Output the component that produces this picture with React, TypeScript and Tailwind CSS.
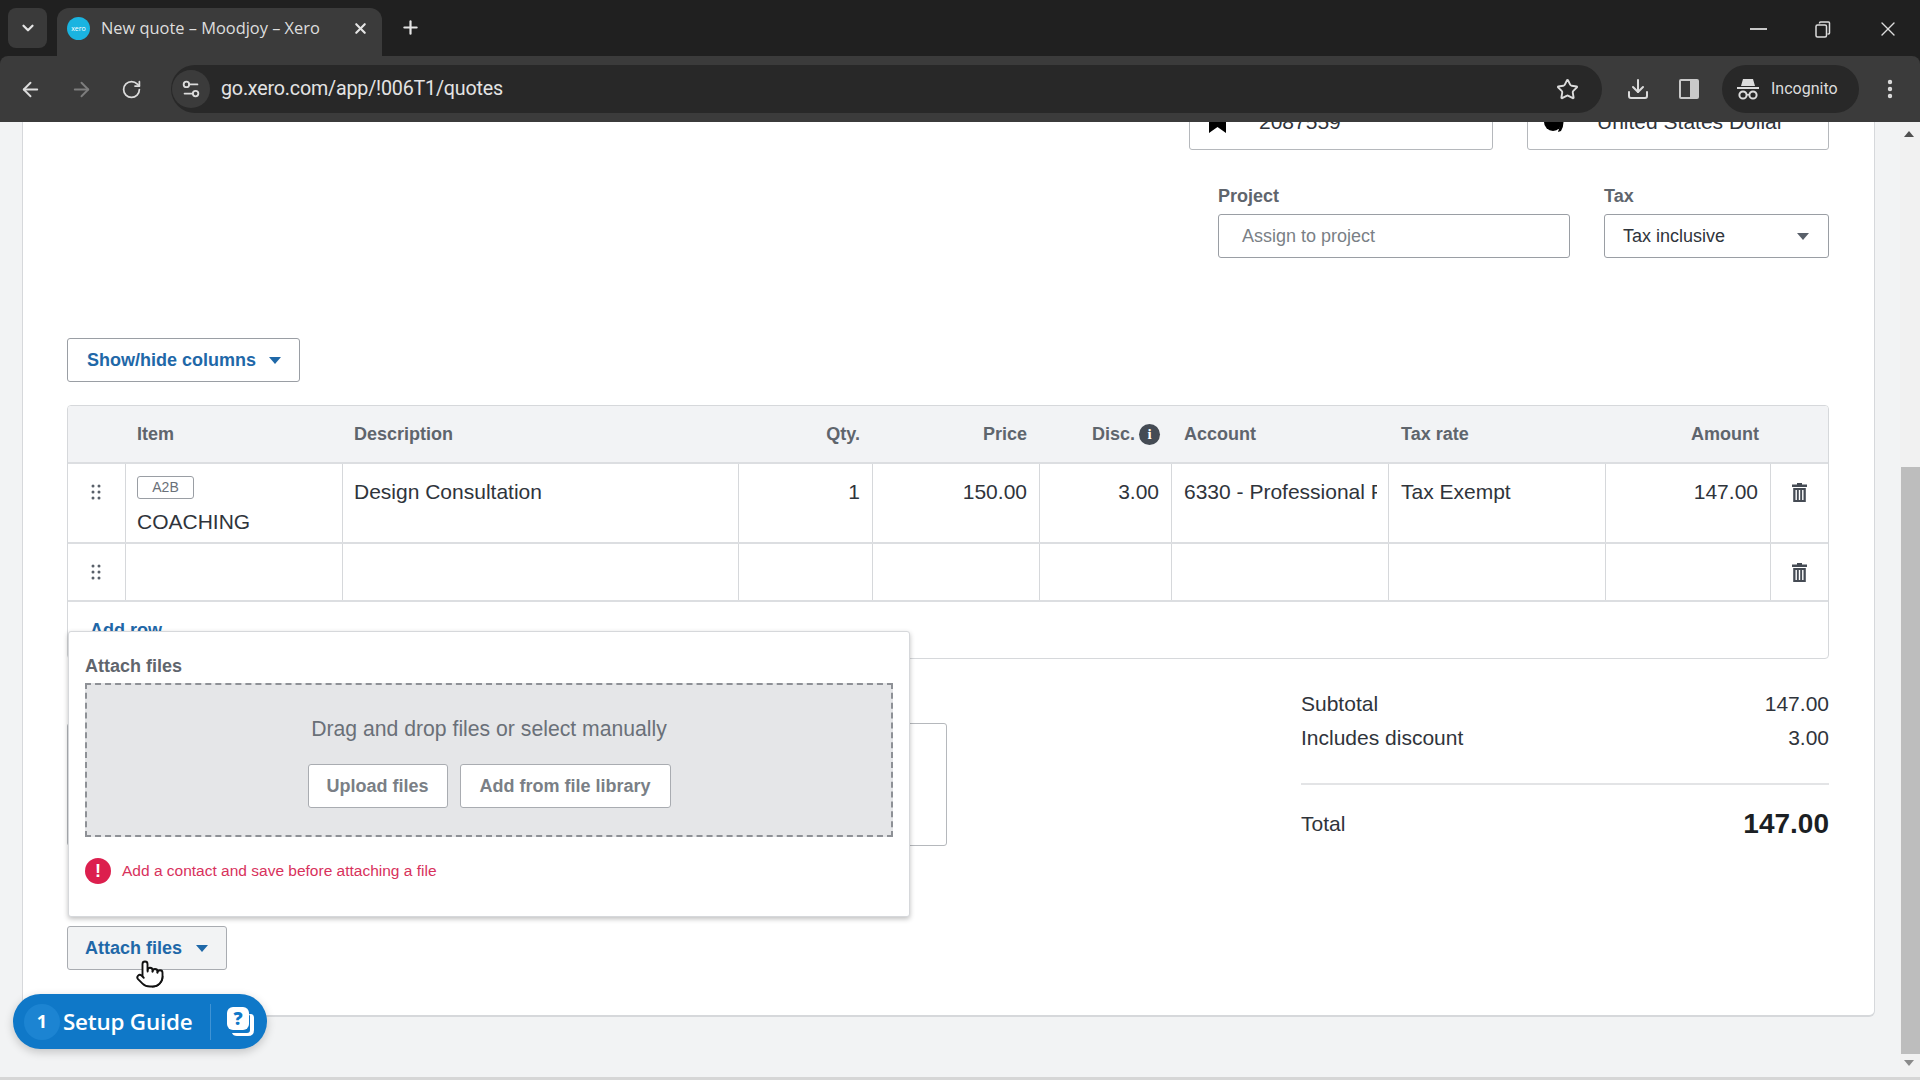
import { ArrowLeft, ArrowRight, ChevronDown, Download, MoreVertical, Plus, Pointer, RotateCw, Settings2, Star, X } from 'lucide-react'

const Caret = ({ className = 'border-t-[#59606a]' }: { className?: string }) => (
  <span className={`inline-block w-0 h-0 border-x-[6px] border-x-transparent border-t-[7px] ${className}`} />
)

const Grip = () => (
  <svg width="10" height="16" viewBox="0 0 10 16" fill="#59606a">
    <circle cx="2" cy="2" r="1.5" /><circle cx="8" cy="2" r="1.5" />
    <circle cx="2" cy="8" r="1.5" /><circle cx="8" cy="8" r="1.5" />
    <circle cx="2" cy="14" r="1.5" /><circle cx="8" cy="14" r="1.5" />
  </svg>
)

const Trash = () => (
  <svg width="15" height="19" viewBox="0 0 15 19" fill="#454b54">
    <path d="M5 0h5v1.5h5V4H0V1.5h5z" />
    <path fillRule="evenodd" d="M1.2 5h12.6v14H1.2zM3.5 7v10h1.4V7zm3.3 0v10h1.4V7zm3.3 0v10h1.4V7z" />
  </svg>
)

const columns = "grid grid-cols-[58px_217px_396px_134px_167px_132px_217px_217px_165px_1fr]"
const cell = "border-r border-[#d6d8db] pl-[11px] pr-[12px]"
const headCell = "pl-[11px] pr-[13px]"

function BrowserChrome() {
  return (
    <div className="shrink-0 bg-[#202020] font-['Open_Sans',sans-serif]">
      {/* tabs */}
      <div className="h-[56px] flex items-end">
        <div className="w-[39px] h-[40px] ml-2 mb-2 rounded-lg bg-[#3a3a3a] flex items-center justify-center text-[#e4e4e4]">
          <ChevronDown size={18} strokeWidth={3} />
        </div>
        <div className="w-[325px] h-[48px] ml-[10px] rounded-t-xl bg-[#3b3b3b] flex items-center pb-[8px] text-[#dedede]">
          <div className="w-[23px] h-[23px] ml-[10px] rounded-full bg-[#1ab4e0] flex items-center justify-center text-[7px] leading-none text-white">xero</div>
          <span className="ml-[11px] text-[16.4px] whitespace-nowrap">New quote – Moodjoy – Xero</span>
          <X size={17} strokeWidth={3} className="ml-[32px] text-[#e4e4e4]" />
        </div>
        <Plus size={21} strokeWidth={2.5} className="ml-[18px] mb-[18px] text-[#e4e4e4]" />
        <div className="flex-1" />
        <div className="flex items-center h-full pt-[2px] text-[#dcdcdc]">
          <div className="w-[17px] h-[2px] bg-[#c8c8c8]" />
          <svg width="16" height="17" viewBox="0 0 16 17" fill="none" stroke="#dcdcdc" strokeWidth="1.5" className="ml-[48px]">
            <rect x="1" y="4" width="10.5" height="12" rx="1.5" />
            <path d="M4.5 2.5V2q0-1 1-1h8q1 0 1 1v10q0 1-1 1h-1" />
          </svg>
          <X size={24} strokeWidth={1.4} className="ml-[45px] mr-5" />
        </div>
      </div>
      {/* toolbar */}
      <div className="h-[66px] bg-[#3b3b3b] rounded-t-lg flex items-center text-[#dcdcdc]">
        <ArrowLeft size={23} className="ml-[19px]" strokeWidth={2} />
        <ArrowRight size={23} className="ml-[28px] text-[#7d7d7d]" strokeWidth={2} />
        <RotateCw size={21} className="ml-[28px]" strokeWidth={2} />
        <div className="w-[1431px] h-[48px] ml-[29px] rounded-full bg-[#282828] flex items-center">
          <div className="w-[38px] h-[38px] ml-[1px] rounded-full bg-[#3b3b3b] flex items-center justify-center">
            <Settings2 size={22} strokeWidth={2} />
          </div>
          <span className="ml-[11px] text-[19.7px] tracking-[-0.2px] font-['Roboto',sans-serif] text-[#e3e3e3]">go.xero.com/app/!006T1/quotes</span>
          <div className="flex-1" />
          <Star size={23} strokeWidth={2} className="mr-[23px]" />
        </div>
        <Download size={24} strokeWidth={2} className="ml-[24px]" />
        <svg width="22" height="22" viewBox="0 0 22 22" className="ml-[28px]">
          <rect x="1" y="1" width="20" height="20" rx="2" fill="#c9c9c9" />
          <rect x="3" y="3" width="9" height="16" fill="#3b3b3b" />
        </svg>
        <div className="w-[137px] h-[48px] ml-[22px] rounded-full bg-[#282828] flex items-center">
          <svg width="24" height="24" viewBox="0 0 24 24" className="ml-[14px]" fill="#dcdcdc">
            <path d="M7 2h10l2 7H5zM1 10h22v2H1z" />
            <circle cx="7" cy="18" r="3.6" fill="none" stroke="#dcdcdc" strokeWidth="2" />
            <circle cx="17" cy="18" r="3.6" fill="none" stroke="#dcdcdc" strokeWidth="2" />
            <path d="M10.5 17h3v1.5h-3z" />
          </svg>
          <span className="ml-[11px] text-[16px] font-['Roboto',sans-serif]">Incognito</span>
        </div>
        <MoreVertical size={24} strokeWidth={2.4} className="ml-[19px]" />
      </div>
    </div>
  )
}

function LineTable() {
  return (
    <div className="mt-[23px] h-[254px] border border-[#d6d8db] rounded-sm overflow-hidden">
      <div className={`${columns} h-[58px] bg-[#f2f3f5] border-b-2 border-[#dcdee1] items-center text-[18px] font-bold text-[#5f656d]`}>
        <div />
        <div className={headCell}>Item</div>
        <div className={headCell}>Description</div>
        <div className={`${headCell} text-right`}>Qty.</div>
        <div className={`${headCell} text-right`}>Price</div>
        <div className="pl-[11px] pr-[12px] flex justify-end items-center gap-[4px]">
          Disc.
          <span className="w-[21px] h-[21px] rounded-full bg-[#454b54] text-white text-[15px] font-bold font-['Liberation_Serif',serif] flex items-center justify-center">i</span>
        </div>
        <div className="pl-[12px]">Account</div>
        <div className="pl-[12px]">Tax rate</div>
        <div className="pl-[11px] pr-[12px] text-right">Amount</div>
        <div />
      </div>
      <div className={`${columns} h-[80px] border-b-2 border-[#dcdee1] text-[21px] text-[#2f343b]`}>
        <div className={`${cell} flex justify-center pt-[20px]`}><Grip /></div>
        <div className={`${cell} pt-[12px]`}>
          <div className="w-[57px] h-[23px] border border-[#9a9ea4] rounded-[3px] text-[14px] leading-[21px] text-[#6a7078] text-center">A2B</div>
          <div className="mt-[9px] leading-[28px]">COACHING</div>
        </div>
        <div className={`${cell} pt-[14px] leading-[28px]`}>Design Consultation</div>
        <div className={`${cell} pt-[14px] leading-[28px] text-right`}>1</div>
        <div className={`${cell} pt-[14px] leading-[28px] text-right`}>150.00</div>
        <div className={`${cell} pt-[14px] leading-[28px] text-right`}>3.00</div>
        <div className="border-r border-[#d6d8db] pl-[12px] pt-[14px] leading-[28px] overflow-hidden whitespace-nowrap"><div className="w-[193px] overflow-hidden">6330 - Professional Fees</div></div>
        <div className="border-r border-[#d6d8db] pl-[12px] pt-[14px] leading-[28px]">Tax Exempt</div>
        <div className={`${cell} pt-[14px] leading-[28px] text-right`}>147.00</div>
        <div className="flex justify-center pt-[19px]"><Trash /></div>
      </div>
      <div className={`${columns} h-[58px] border-b-2 border-[#dcdee1]`}>
        <div className={`${cell} flex items-center justify-center`}><Grip /></div>
        <div className={cell} /><div className={cell} /><div className={cell} /><div className={cell} />
        <div className={cell} /><div className={cell} /><div className={cell} /><div className={cell} />
        <div className="flex items-center justify-center"><Trash /></div>
      </div>
      <div className="pl-[22px] pt-[16px] text-[18px] font-bold text-[#1f68a8] leading-[24px]">Add row</div>
    </div>
  )
}

function AttachPopover() {
  return (
    <div className="absolute left-[45px] top-[509px] w-[842px] h-[286px] bg-white border border-[#d6d8db] rounded-[3px] shadow-[0_2px_5px_rgba(0,0,0,0.25)] px-[16px] z-10">
      <div className="mt-[22px] text-[18px] leading-[24px] font-bold text-[#5f656d]">Attach files</div>
      <div className="mt-[5px] h-[154px] bg-[#e5e6e8] border-2 border-dashed border-[#8e9196] flex flex-col items-center pt-[30px]">
        <div className="text-[21.2px] leading-[28px] text-[#6a7078]">Drag and drop files or select manually</div>
        <div className="mt-[21px] flex gap-[12px] text-[18px] font-bold text-[#7a7f86]">
          <div className="w-[140px] h-[44px] bg-white border border-[#a9acb1] rounded-[3px] flex items-center justify-center">Upload files</div>
          <div className="w-[211px] h-[44px] bg-white border border-[#a9acb1] rounded-[3px] flex items-center justify-center">Add from file library</div>
        </div>
      </div>
      <div className="mt-[21px] flex items-center">
        <span className="w-[26px] h-[26px] rounded-full bg-[#dc1f4e] text-white text-[18px] font-bold flex items-center justify-center">!</span>
        <span className="ml-[11px] text-[15.5px] text-[#d8315c]">Add a contact and save before attaching a file</span>
      </div>
    </div>
  )
}

function SetupGuide() {
  return (
    <div className="absolute left-[13px] top-[872px] w-[254px] h-[55px] rounded-full bg-[#0f78c8] shadow-[0_3px_10px_rgba(0,0,0,0.2)] flex items-center text-white font-['Open_Sans',sans-serif] z-20">
      <span className="w-[36px] h-[36px] ml-[11px] rounded-full bg-[#1c84d2] flex items-center justify-center text-[18px] font-bold">1</span>
      <span className="ml-[3px] w-[133px] text-[22.4px] font-semibold whitespace-nowrap tracking-[-0.2px]">Setup Guide</span>
      <div className="ml-[14px] w-px h-[36px] bg-[#3f93d4]" />
      <svg width="30" height="32" viewBox="0 0 30 32" className="ml-[14px]">
        <path d="M24 8h1.5Q29 8 29 12v12q0 6-6 6H12q-4 0-5-3h15q3 0 3-3V10z" fill="#fff" />
        <rect x="2" y="1" width="22" height="23" rx="6" fill="#fff" />
        <text x="13" y="19" textAnchor="middle" fontSize="18" fontWeight="800" fill="#0f78c8" fontFamily="Open Sans">?</text>
      </svg>
    </div>
  )
}

export default function App() {
  return (
    <div className="w-[1920px] h-[1080px] flex flex-col overflow-hidden font-['Liberation_Sans',sans-serif]">
      <BrowserChrome />
      <div className="relative flex-1 flex bg-[#f2f3f4] overflow-hidden">
        <div className="flex-1 pl-[22px] pr-[25px] min-w-0">
          {/* card */}
          <div className="relative h-[895px] bg-white border-x border-b-2 border-[#d6d8db] rounded-b-md pl-[44px] pr-[45px]">
            <div className="flex justify-end gap-[34px]">
              <div className="w-[304px] h-[56px] -mt-[28px] border border-[#b5b8bc] rounded-[3px] flex items-center pl-[19px] text-[21px] text-[#2f343b]">
                <svg width="17" height="22" viewBox="0 0 17 22" fill="#000"><path d="M0 0h17v22l-8.5-6L0 22z" /></svg>
                <span className="ml-[33px]">2087559</span>
              </div>
              <div className="w-[302px] h-[56px] -mt-[28px] border border-[#b5b8bc] rounded-[3px] flex items-center pl-[16px] text-[21px] text-[#2f343b]">
                <svg width="22" height="22" viewBox="0 0 22 22" fill="#000"><circle cx="9" cy="11" r="9" /><path d="M17 3q5 8 0 17l-3 1q4-10 0-18z" /></svg>
                <span className="ml-[31px]">United States Dollar</span>
              </div>
            </div>
            <div className="mt-[34px] flex justify-end gap-[34px]">
              <div className="w-[352px]">
                <div className="text-[18px] leading-[24px] font-bold text-[#5f656d]">Project</div>
                <div className="mt-[6px] h-[44px] border border-[#9a9ea4] rounded-[3px] flex items-center pl-[23px] text-[18px] text-[#7a7f86]">Assign to project</div>
              </div>
              <div className="w-[225px]">
                <div className="text-[18px] leading-[24px] font-bold text-[#5f656d]">Tax</div>
                <div className="mt-[6px] h-[44px] border border-[#9a9ea4] rounded-[3px] flex items-center justify-between pl-[18px] pr-[19px] text-[18px] text-[#2f343b]">
                  Tax inclusive
                  <Caret />
                </div>
              </div>
            </div>
            <div className="mt-[80px] w-[233px] h-[44px] border border-[#9a9ea4] rounded-[3px] flex items-center pl-[19px] gap-[13px] text-[18px] font-bold text-[#1f68a8]">
              Show/hide columns
              <Caret className="border-t-[#1f68a8]" />
            </div>
            <LineTable />
            <div className="flex justify-between">
              <div className="w-[880px]">
                <div className="mt-[64px] h-[123px] border border-[#b5b8bc] rounded-[3px]" />
                <div className="mt-[80px] w-[160px] h-[44px] bg-[#f2f3f4] border border-[#a9acb1] rounded-[3px] flex items-center pl-[17px] gap-[14px] text-[18px] font-bold text-[#1f68a8]">
                  Attach files
                  <Caret className="border-t-[#1f68a8]" />
                </div>
              </div>
              <div className="w-[528px] pt-[28px] text-[21px] leading-[34px] text-[#2f343b]">
                <div className="flex justify-between"><span>Subtotal</span><span>147.00</span></div>
                <div className="flex justify-between"><span>Includes discount</span><span>3.00</span></div>
                <div className="mt-[28px] h-[2px] bg-[#e3e4e6]" />
                <div className="mt-[22px] flex justify-between items-center">
                  <span>Total</span>
                  <span className="text-[28px] font-bold text-[#1b1f24]">147.00</span>
                </div>
              </div>
            </div>
            <AttachPopover />
            <Pointer size={30} fill="#fff" stroke="#111" strokeWidth={1.5} className="absolute left-[112px] top-[837px] z-30" />
          </div>
        </div>
        {/* scrollbar */}
        <div className="w-[20px] shrink-0 bg-[#f1f1f1] flex flex-col items-center pt-[9px]">
          <span className="mr-[3px] w-0 h-0 border-x-[5px] border-x-transparent border-b-[6px] border-b-[#505050]" />
          <div className="mt-[330px] w-[19px] h-[587px] bg-[#bdbdbd]" />
          <span className="mr-[3px] mt-[6px] w-0 h-0 border-x-[5px] border-x-transparent border-t-[6px] border-t-[#8a8a8a]" />
        </div>
        <SetupGuide />
        <div className="absolute left-0 right-0 bottom-0 h-[3px] bg-[#d6d6d6]" />
      </div>
    </div>
  )
}
